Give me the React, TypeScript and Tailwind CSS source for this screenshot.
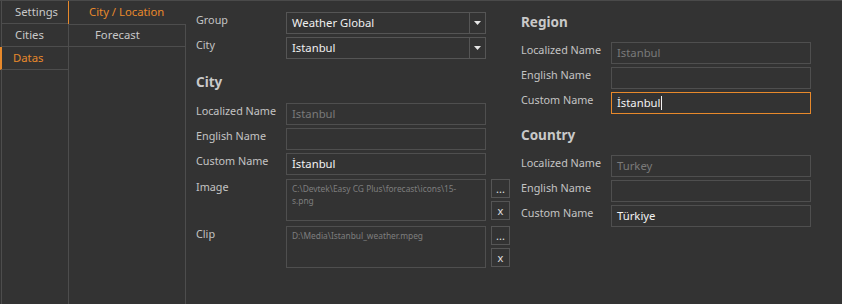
const font = { fontFamily: '"Noto Sans", "Open Sans", sans-serif' }

function Arrow() {
  return (
    <svg width="7" height="4" viewBox="0 0 7 4">
      <path d="M0 0H7L3.5 4Z" fill="#e6e6e6" />
    </svg>
  )
}

function Label({ children }: { children: React.ReactNode }) {
  return <div className="w-[90px] shrink-0 text-[10.8px] leading-[16px] text-[#c4c4c4]">{children}</div>
}

function Select({ value }: { value: string }) {
  return (
    <div className="flex h-[22px] w-[200px] border border-[#555]">
      <div className="flex flex-1 items-center pl-[5px] text-[11.3px] text-[#efefef]">{value}</div>
      <div className="flex w-[16px] items-center justify-center border-l border-[#555]">
        <Arrow />
      </div>
    </div>
  )
}

function Field({ value, muted, focused, caret }: { value?: string; muted?: boolean; focused?: boolean; caret?: boolean }) {
  return (
    <div
      className={
        'flex h-[22px] w-[200px] items-center pl-[5px] text-[11.3px] ' +
        (focused ? 'border border-[#e8892b] ' : 'border border-[#4f4f4f] ') +
        (muted ? 'text-[#7a7a7a]' : 'text-[#f2f2f2]')
      }
    >
      {value}
      {caret && <span className="ml-px h-[14px] w-px bg-[#f2f2f2]"></span>}
    </div>
  )
}

function Row({ label, children }: { label: string; children: React.ReactNode }) {
  return (
    <div className="flex items-start">
      <Label>{label}</Label>
      {children}
    </div>
  )
}

function SmallBtn({ children }: { children: React.ReactNode }) {
  return (
    <div className="flex h-[19px] w-[19px] items-center justify-center border border-[#555] text-[11px] leading-none text-[#e0e0e0]">
      {children}
    </div>
  )
}

function FileRow({ label, lines }: { label: string; lines: string[] }) {
  return (
    <div className="flex items-start">
      <Label>{label}</Label>
      <div className="h-[42px] w-[200px] border border-[#4f4f4f] px-[5px] pt-[3px] text-[8.4px] leading-[12px] text-[#7e7e7e]">
        {lines.map((l) => (
          <div key={l} className="whitespace-nowrap">{l}</div>
        ))}
      </div>
      <div className="ml-[5px] flex flex-col gap-[3px]">
        <SmallBtn>...</SmallBtn>
        <SmallBtn>x</SmallBtn>
      </div>
    </div>
  )
}

function Heading({ children }: { children: React.ReactNode }) {
  return <div className="h-[20px] text-[13.5px] font-bold leading-[20px] text-[#c9c9c9]">{children}</div>
}

export default function App() {
  return (
    <div style={font} className="flex h-[304px] w-[842px] overflow-hidden border-t border-[#4a4a4a] bg-[#333333]">
      {/* main tabs */}
      <div className="flex w-[68px] shrink-0 flex-col text-[11.3px]">
        <div className="ml-px flex h-[23px] items-center border-b border-l border-[#4d4d4d] pl-[13px] text-[#c8c8c8]">Settings</div>
        <div className="ml-px flex h-[23px] items-center border-b border-l border-[#4d4d4d] pl-[13px] text-[#c8c8c8]">Cities</div>
        <div className="flex h-[23px] items-center border-b border-l-2 border-b-[#4d4d4d] border-l-[#e8892b] pl-[11px] text-[#e8892b]">Datas</div>
        <div className="ml-px flex-1 border-l border-[#4d4d4d]"></div>
      </div>

      {/* sub tabs */}
      <div className="flex w-[118px] shrink-0 flex-col text-[11.3px]">
        <div className="flex h-[23px] items-center border-l border-[#e8892b] pl-[20px] text-[#e8892b]">City / Location</div>
        <div className="flex h-[23px] items-center border border-[#4d4d4d] pl-[26px] text-[#c8c8c8]">Forecast</div>
        <div className="flex-1 border-x border-[#4d4d4d]"></div>
      </div>

      {/* content */}
      <div className="flex pl-[10px] pt-[11px]">
        <div className="flex flex-col">
          <div className="flex flex-col gap-[3px]">
            <Row label="Group"><Select value="Weather Global" /></Row>
            <Row label="City"><Select value="Istanbul" /></Row>
          </div>
          <div className="mb-[11px] mt-[13px]">
            <Heading>City</Heading>
          </div>
          <div className="flex flex-col gap-[3px]">
            <Row label="Localized Name"><Field value="Istanbul" muted /></Row>
            <Row label="English Name"><Field /></Row>
            <Row label="Custom Name"><Field value="İstanbul" /></Row>
          </div>
          <div className="mt-[4px] flex flex-col gap-[5px]">
            <FileRow label="Image" lines={['C:\\Devtek\\Easy CG Plus\\forecast\\icons\\15-', 's.png']} />
            <FileRow label="Clip" lines={['D:\\Media\\Istanbul_weather.mpeg']} />
          </div>
        </div>

        <div className="ml-[11px] flex flex-col">
          <div className="mb-[10px]">
            <Heading>Region</Heading>
          </div>
          <div className="flex flex-col gap-[3px]">
            <Row label="Localized Name"><Field value="Istanbul" muted /></Row>
            <Row label="English Name"><Field /></Row>
            <Row label="Custom Name"><Field value="İstanbul" focused caret /></Row>
          </div>
          <div className="mb-[10px] mt-[11px]">
            <Heading>Country</Heading>
          </div>
          <div className="flex flex-col gap-[3px]">
            <Row label="Localized Name"><Field value="Turkey" muted /></Row>
            <Row label="English Name"><Field /></Row>
            <Row label="Custom Name"><Field value="Türkiye" /></Row>
          </div>
        </div>
      </div>
    </div>
  )
}
